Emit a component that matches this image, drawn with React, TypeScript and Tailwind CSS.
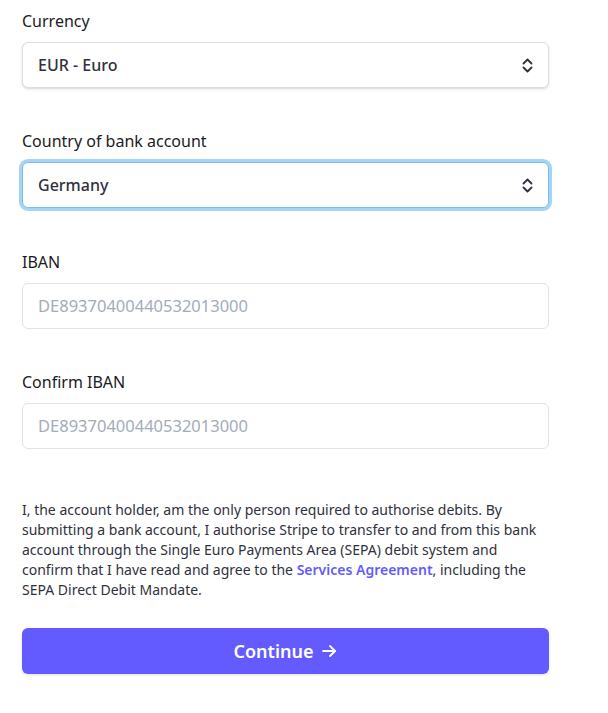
import React from 'react';

const font = { fontFamily: '"Noto Sans", "Open Sans", sans-serif' };

const Chevrons: React.FC = () => (
  <svg width="11" height="15" viewBox="0 0 11 15" fill="none" stroke="#30313d" strokeWidth="1.8" strokeLinecap="round" strokeLinejoin="round">
    <path d="M1.5 5.5L5.5 1.5L9.5 5.5" />
    <path d="M1.5 9.5L5.5 13.5L9.5 9.5" />
  </svg>
);

const Label: React.FC<{ children: React.ReactNode }> = ({ children }) => (
  <div className="h-6 leading-6 text-[16px] font-normal text-[#1a1b25] mb-[9px]">{children}</div>
);

const App: React.FC = () => {
  return (
    <div className="bg-white min-h-[713px] w-[608px] pt-[9px] px-[22px]" style={font}>
      <div className="w-[527px] flex flex-col">
        <Label>Currency</Label>
        <div className="h-[46px] rounded-md border border-[#dedede] bg-white shadow-[0_1px_2px_rgba(0,0,0,0.12),0_2px_4px_rgba(0,0,0,0.04)] flex items-center justify-between px-[15px]">
          <span className="text-[16px] font-medium text-[#30313d]">EUR - Euro</span>
          <Chevrons />
        </div>

        <div className="mt-[41px]">
          <Label>Country of bank account</Label>
          <div className="h-[46px] rounded-md border border-[#7fbde9] bg-white shadow-[0_0_0_3px_#a5d5f6] flex items-center justify-between px-[15px]">
            <span className="text-[16px] font-medium text-[#30313d]">Germany</span>
            <Chevrons />
          </div>
        </div>

        <div className="mt-[42px]">
          <Label>IBAN</Label>
          <div className="h-[46px] rounded-md border border-[#e3e3e3] bg-white flex items-center px-[15px]">
            <span className="text-[16.5px] text-[#a3acb9]">DE89370400440532013000</span>
          </div>
        </div>

        <div className="mt-[41px]">
          <Label>Confirm IBAN</Label>
          <div className="h-[46px] rounded-md border border-[#e3e3e3] bg-white flex items-center px-[15px]">
            <span className="text-[16.5px] text-[#a3acb9]">DE89370400440532013000</span>
          </div>
        </div>

        <p className="mt-[51px] text-[14px] leading-5 text-[#30313d]">
          I, the account holder, am the only person required to authorise debits. By submitting a bank account, I authorise Stripe to transfer to and from this bank account through the Single Euro Payments Area (SEPA) debit system and confirm that I have read and agree to the{' '}
          <span className="text-[#635bff] font-semibold">Services Agreement</span>, including the SEPA Direct Debit Mandate.
        </p>

        <button className="mt-[28px] h-[46px] rounded-md bg-[#635bff] text-white text-[18px] font-semibold flex items-center justify-center gap-2 shadow-[0_1px_3px_rgba(0,0,0,0.12)]">
          <span>Continue</span>
          <svg width="16" height="16" viewBox="0 0 16 16" fill="none" stroke="white" strokeWidth="1.8" strokeLinecap="round" strokeLinejoin="round">
            <path d="M2 8H14" />
            <path d="M9 3L14 8L9 13" />
          </svg>
        </button>
      </div>
    </div>
  );
};

export default App;
